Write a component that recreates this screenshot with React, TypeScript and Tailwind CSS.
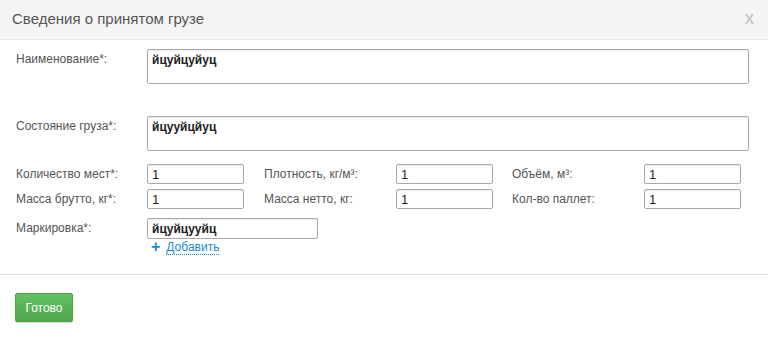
import React from 'react';

const font = { fontFamily: '"Liberation Sans", Arial, sans-serif' };

const fieldCls =
  'border border-[#a9a9a9] rounded-[2px] bg-white px-[4px] text-[#222] shadow-[inset_0_1px_1px_rgba(0,0,0,0.08)] outline-none';

const Label: React.FC<{ text: string; w: string }> = ({ text, w }) => (
  <div className={`${w} shrink-0 text-[12px] leading-[14px] text-[#555] pt-[3px]`}>{text}</div>
);

const SmallField: React.FC<{ label: string; w: string; value: string }> = ({ label, w, value }) => (
  <div className="flex items-start">
    <Label text={label} w={w} />
    <input readOnly value={value} className={`${fieldCls} w-[97px] h-[20px] text-[13px] leading-[18px]`} />
  </div>
);

const Row: React.FC<{ items: [string, string][]; className: string }> = ({ items, className }) => (
  <div className={`flex items-start ${className}`}>
    <SmallField label={items[0][0]} w="w-[131px]" value={items[0][1]} />
    <div className="ml-[20px]">
      <SmallField label={items[1][0]} w="w-[132px]" value={items[1][1]} />
    </div>
    <div className="ml-[19px]">
      <SmallField label={items[2][0]} w="w-[132px]" value={items[2][1]} />
    </div>
  </div>
);

const App: React.FC = () => {
  return (
    <div className="w-[768px] h-[339px] bg-white overflow-hidden" style={font}>
      <div className="h-[40px] bg-[#f5f5f5] border-b border-[#e6e6e6] flex items-center justify-between pl-[12px] pr-[14px]">
        <span className="text-[15px] text-[#555]">Сведения о принятом грузе</span>
        <span className="text-[14px] font-bold text-[#c8c8c8]">X</span>
      </div>

      <div className="pl-[16px] pt-[9px]">
        <div className="flex items-start">
          <Label text="Наименование*:" w="w-[131px]" />
          <textarea
            readOnly
            value="йцуйцуйуц"
            className={`${fieldCls} w-[602px] h-[35px] resize-none pt-[2px] text-[12px] leading-[16px] font-bold`}
          />
        </div>

        <div className="flex items-start mt-[32px]">
          <Label text="Состояние груза*:" w="w-[131px]" />
          <textarea
            readOnly
            value="йцууйцйуц"
            className={`${fieldCls} w-[602px] h-[35px] resize-none pt-[2px] text-[12px] leading-[16px] font-bold`}
          />
        </div>

        <Row
          className="mt-[13px]"
          items={[
            ['Количество мест*:', '1'],
            ['Плотность, кг/м³:', '1'],
            ['Объём, м³:', '1'],
          ]}
        />
        <Row
          className="mt-[5px]"
          items={[
            ['Масса брутто, кг*:', '1'],
            ['Масса нетто, кг:', '1'],
            ['Кол-во паллет:', '1'],
          ]}
        />

        <div className="flex items-start mt-[9px]">
          <Label text="Маркировка*:" w="w-[131px]" />
          <div className="flex flex-col">
            <input
              readOnly
              value="йцуйцууйц"
              className={`${fieldCls} w-[171px] h-[21px] font-bold text-[12px] leading-[19px]`}
            />
            <div className="flex items-center mt-[1px] pl-[4px] h-[14px]">
              <span className="text-[#1a8bd0] text-[16px] font-bold leading-[14px] mr-[6px]">+</span>
              <span className="text-[12px] leading-[14px] text-[#1a8bd0] border-b border-dotted border-[#1a8bd0]">
                Добавить
              </span>
            </div>
          </div>
        </div>
      </div>

      <div className="mt-[20px] border-t border-[#dcdcdc]" />

      <div className="pl-[15px] pt-[18px]">
        <button className="w-[58px] h-[29px] rounded-[2px] border border-[#48a048] bg-gradient-to-b from-[#62c162] to-[#4ea64e] text-white text-[12px] shadow-[0_1px_1px_rgba(0,0,0,0.15)]">
          Готово
        </button>
      </div>
    </div>
  );
};

export default App;
